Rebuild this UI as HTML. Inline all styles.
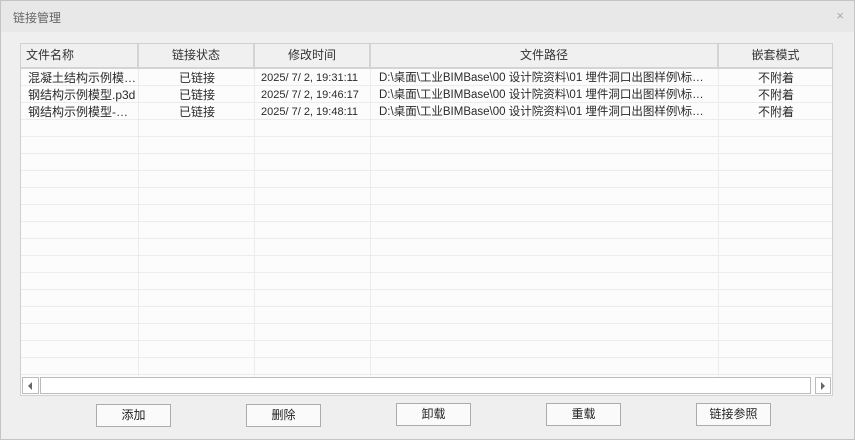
<!DOCTYPE html><html><head><meta charset="utf-8"><style>
*{margin:0;padding:0;box-sizing:border-box}
body{width:855px;height:440px;background:#fff;font-family:"Liberation Sans","Noto Sans CJK SC",sans-serif;font-size:12px;color:#222;position:relative;overflow:hidden}
.win{position:absolute;left:0;top:0;width:855px;height:440px;border:1px solid #c4c4c4;background:#efefef}
.title{position:absolute;left:0;top:0;width:853px;height:31px;background:#e8e8e8;color:#666;font-size:12px;padding:8px 0 0 12px}
.x{position:absolute;right:10px;top:7px;color:#aaa;font-size:13px}
.tbl{position:absolute;left:19px;top:42px;width:813px;height:353px;border:1px solid #d0d0d0;background:#fcfcfc;overflow:hidden}
.c{position:absolute;top:0;height:333px;border-right:1px solid #ececec}
.hd{position:absolute;top:0;height:25px;background:#f0f0f0;border-right:2px solid #d4d4d4;border-bottom:2px solid #d4d4d4;text-align:center;line-height:23px;color:#333}
.r{position:absolute;left:0;width:811px;height:17px;border-bottom:1px solid #ececec}
.t{position:absolute;line-height:16px;white-space:nowrap;color:#2a2a2a}
.sb{position:absolute;left:1px;top:333px;width:810px;height:17px}
.btn{position:absolute;width:75px;height:23px;border:1px solid #acacac;background:#fafafa;text-align:center;line-height:21px;color:#222}
</style></head><body><div class="win">
<div class="title">链接管理</div><div class="x">×</div>
<div class="tbl">
<div class="hd" style="left:0;width:118px;text-align:left;padding-left:5px">文件名称</div>
<div class="hd" style="left:118px;width:116px">链接状态</div>
<div class="hd" style="left:234px;width:116px">修改时间</div>
<div class="hd" style="left:350px;width:348px">文件路径</div>
<div class="hd" style="left:698px;width:113px;border-right:none">嵌套模式</div>
<div class="c" style="left:0;width:118px;top:25px;height:308px"></div>
<div class="c" style="left:118px;width:116px;top:25px;height:308px"></div>
<div class="c" style="left:234px;width:116px;top:25px;height:308px"></div>
<div class="c" style="left:350px;width:348px;top:25px;height:308px"></div>
<div id="rows"></div>
<div class="t" style="left:7px;top:26px">混凝土结构示例模…</div>
<div class="t" style="left:7px;top:43px">钢结构示例模型.p3d</div>
<div class="t" style="left:7px;top:60px">钢结构示例模型-…</div>
<div class="t" style="left:158px;top:26px">已链接</div><div class="t" style="left:158px;top:43px">已链接</div><div class="t" style="left:158px;top:60px">已链接</div>
<div class="t" style="left:240px;top:26px;font-size:11px">2025/ 7/ 2, 19:31:11</div>
<div class="t" style="left:240px;top:43px;font-size:11px">2025/ 7/ 2, 19:46:17</div>
<div class="t" style="left:240px;top:60px;font-size:11px">2025/ 7/ 2, 19:48:11</div>
<div class="t" style="left:358px;top:26px;font-size:11.5px">D:\桌面\工业BIMBase\00 设计院资料\01 埋件洞口出图样例\标…</div>
<div class="t" style="left:358px;top:43px;font-size:11.5px">D:\桌面\工业BIMBase\00 设计院资料\01 埋件洞口出图样例\标…</div>
<div class="t" style="left:358px;top:60px;font-size:11.5px">D:\桌面\工业BIMBase\00 设计院资料\01 埋件洞口出图样例\标…</div>
<div class="t" style="left:737px;top:26px">不附着</div><div class="t" style="left:737px;top:43px">不附着</div><div class="t" style="left:737px;top:60px">不附着</div>
<div class="sb">
<div style="position:absolute;left:0;top:0;width:17px;height:17px;border:1px solid #bbb;background:#fff"><div style="position:absolute;left:5px;top:4px;border-right:4px solid #666;border-top:4px solid transparent;border-bottom:4px solid transparent"></div></div>
<div style="position:absolute;left:18px;top:0;width:771px;height:17px;border:1px solid #bbb;background:#fff"></div>
<div style="position:absolute;left:793px;top:0;width:16px;height:17px;border:1px solid #bbb;background:#fff"><div style="position:absolute;left:5px;top:4px;border-left:4px solid #666;border-top:4px solid transparent;border-bottom:4px solid transparent"></div></div>
</div>
</div>
<div class="btn" style="left:95px;top:403px">添加</div>
<div class="btn" style="left:245px;top:403px">删除</div>
<div class="btn" style="left:395px;top:402px">卸载</div>
<div class="btn" style="left:545px;top:402px">重载</div>
<div class="btn" style="left:695px;top:402px">链接参照</div>
</div>
<script>
var h='';for(var i=0;i<18;i++){h+='<div class="r" style="top:'+(25+i*17)+'px"></div>';}
document.getElementById('rows').innerHTML=h;
</script>
</body></html>
